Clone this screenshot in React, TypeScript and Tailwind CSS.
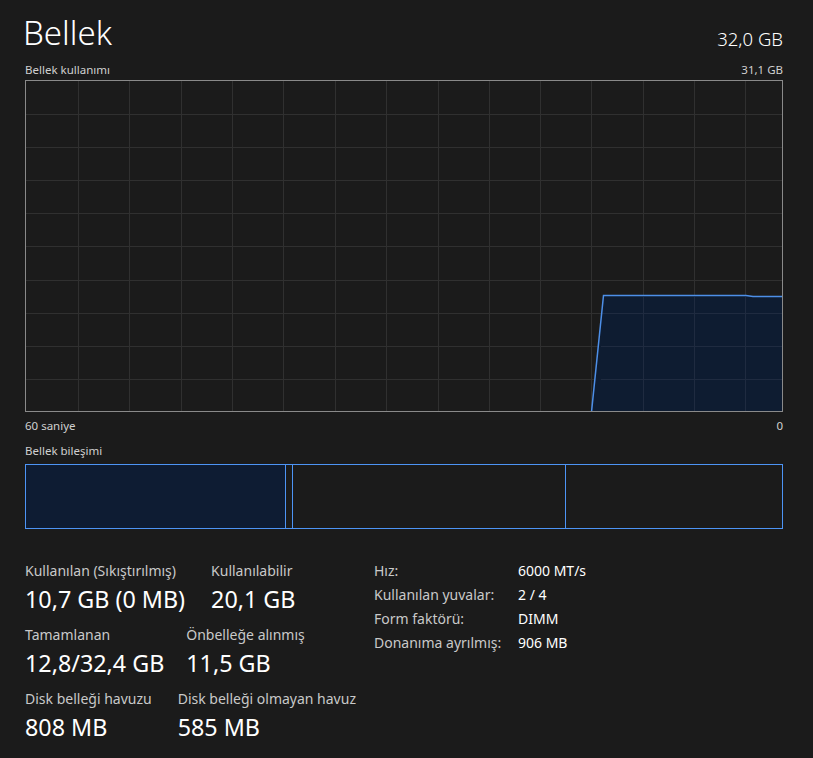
import React from 'react';

const font = { fontFamily: '"Noto Sans", "Open Sans", sans-serif' };

function UsageGraph() {
  const W = 756;
  const H = 330;
  const vLines = [52, 103, 155, 206, 257, 309, 360, 412, 463, 514, 565, 617, 668, 719];
  const hLines = [33, 66, 99, 132, 165, 199, 232, 265, 298];
  return (
    <div className="border border-[#8a8a8a] w-[758px] h-[332px]">
      <svg width={W} height={H} viewBox={`0 0 ${W} ${H}`} className="block">
        {vLines.map((x) => (
          <line key={'v' + x} x1={x + 0.5} y1={0} x2={x + 0.5} y2={H} stroke="#303030" strokeWidth="1" />
        ))}
        {hLines.map((y) => (
          <line key={'h' + y} x1={0} y1={y + 0.5} x2={W} y2={y + 0.5} stroke="#303030" strokeWidth="1" />
        ))}
        <path d="M565.5 331 L577.5 214.5 L720 214.5 L727 215.5 L757 215.5 L757 331 Z" fill="#0e1c33" fillOpacity="0.95" />
        {vLines.filter((x) => x > 570).map((x) => (
          <line key={'fv' + x} x1={x + 0.5} y1={216} x2={x + 0.5} y2={H} stroke="#1f2b40" strokeWidth="1" />
        ))}
        {hLines.filter((y) => y > 216).map((y) => (
          <line key={'fh' + y} x1={575} y1={y + 0.5} x2={W} y2={y + 0.5} stroke="#1f2b40" strokeWidth="1" />
        ))}
        <path d="M565.5 331 L577.5 214.5 L720 214.5 L727 215.5 L757 215.5" fill="none" stroke="#4d8fe8" strokeWidth="1.5" />
      </svg>
    </div>
  );
}

function Stat({ label, value }: { label: string; value: string }) {
  return (
    <div className="flex flex-col">
      <span className="text-[14px] leading-[20px] text-[#c9c9c9]">{label}</span>
      <span className="text-[23.3px] leading-[32px] text-white mt-[2px]">{value}</span>
    </div>
  );
}

export default function App() {
  const specs: [string, string][] = [
    ['Hız:', '6000 MT/s'],
    ['Kullanılan yuvalar:', '2 / 4'],
    ['Form faktörü:', 'DIMM'],
    ['Donanıma ayrılmış:', '906 MB'],
  ];

  return (
    <div className="w-[813px] h-[758px] bg-[#1b1b1b] pl-[25px] pr-[30px] pt-[9px] overflow-hidden" style={font}>
      {/* Header */}
      <div className="flex items-end justify-between h-[45px]">
        <h1 className="text-[33px] leading-[42px] font-light text-white -ml-[2px]">Bellek</h1>
        <span className="text-[18.5px] leading-[26px] font-light text-white mb-[2px]">32,0 GB</span>
      </div>

      <div className="flex justify-between mt-[6px] text-[11.5px] leading-[20px] text-[#d0d0d0]">
        <span>Bellek kullanımı</span>
        <span>31,1 GB</span>
      </div>

      <UsageGraph />

      <div className="flex justify-between text-[11.5px] leading-[24px] text-[#d0d0d0] mt-[2px]">
        <span>60 saniye</span>
        <span>0</span>
      </div>

      <div className="text-[11.5px] leading-[20px] text-[#d0d0d0] mt-[3px]">Bellek bileşimi</div>

      {/* Composition bar */}
      <div className="flex w-[758px] h-[65px] border border-[#4d94f5] mt-[3px]">
        <div className="w-[260px] bg-[#0e1c33] border-r border-[#4d94f5]" />
        <div className="w-[7px] border-r border-[#4d94f5]" />
        <div className="w-[273px] border-r border-[#4d94f5]" />
        <div className="flex-1" />
      </div>

      {/* Stats */}
      <div className="flex mt-[32px]">
        <div className="w-[349px] flex flex-col gap-[10px]">
          <div className="flex gap-[26px]">
            <Stat label="Kullanılan (Sıkıştırılmış)" value="10,7 GB (0 MB)" />
            <Stat label="Kullanılabilir" value="20,1 GB" />
          </div>
          <div className="flex gap-[22px]">
            <Stat label="Tamamlanan" value="12,8/32,4 GB" />
            <Stat label="Önbelleğe alınmış" value="11,5 GB" />
          </div>
          <div className="flex gap-[26px]">
            <Stat label="Disk belleği havuzu" value="808 MB" />
            <Stat label="Disk belleği olmayan havuz" value="585 MB" />
          </div>
        </div>
        <div className="flex flex-col -mt-[2px]">
          {specs.map(([k, v]) => (
            <div key={k} className="flex text-[14px] leading-[24px]">
              <span className="w-[144px] text-[#c9c9c9]">{k}</span>
              <span className="text-white">{v}</span>
            </div>
          ))}
        </div>
      </div>
    </div>
  );
}
